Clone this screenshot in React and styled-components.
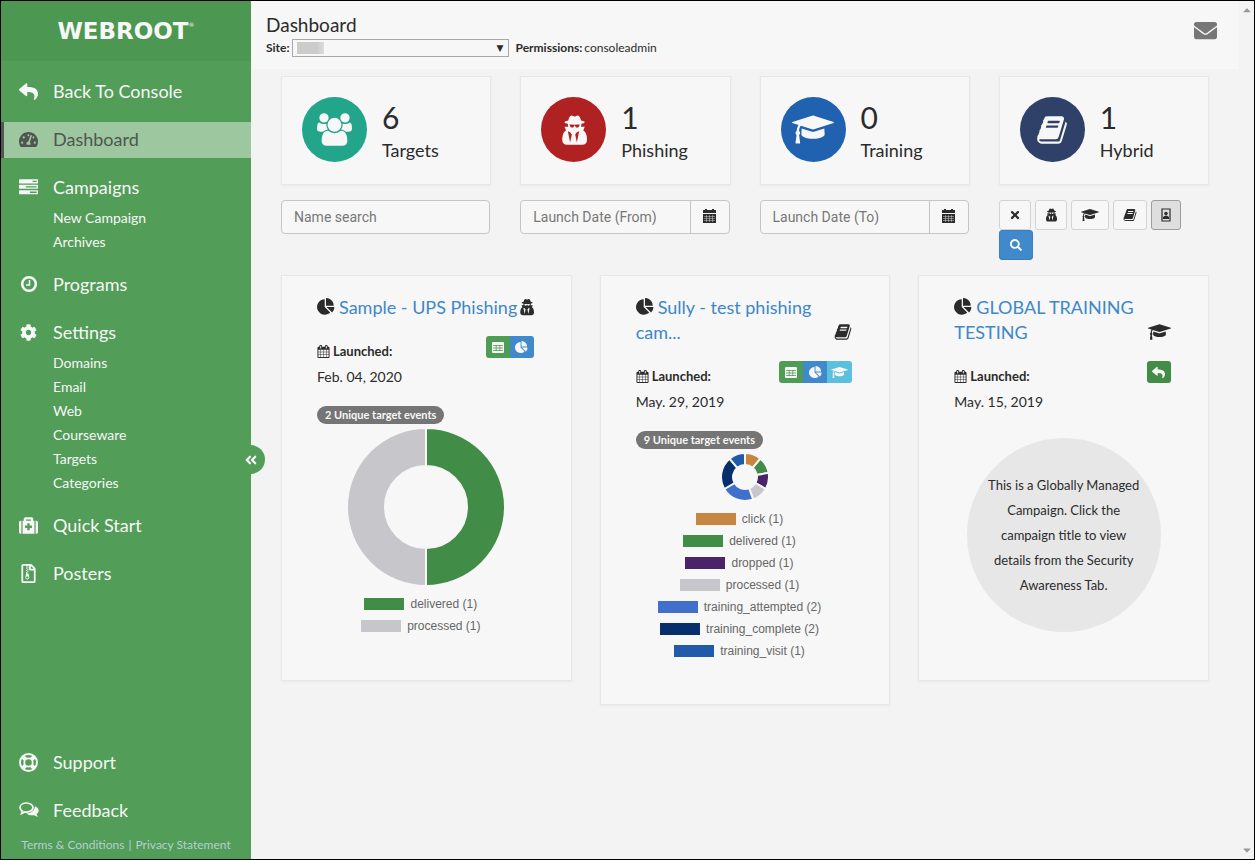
import React from 'react';
import styled, { createGlobalStyle } from 'styled-components';
import {
  FaReply, FaTachometerAlt, FaCog, FaMedkit, FaRegFileArchive,
  FaEnvelope, FaAngleDoubleLeft, FaSearch, FaTimes, FaCaretUp, FaCaretDown,
} from 'react-icons/fa';

const GlobalStyle = createGlobalStyle`
  * { box-sizing: border-box; }
  body {
    margin: 0;
    background: #f3f3f4;
    color: #2b2b2b;
    font-family: Lato, "Liberation Sans", sans-serif;
    font-size: 13px;
  }
  ul { list-style: none; margin: 0; padding: 0; }
  h1, h2, p { margin: 0; font-weight: 400; }
  a { text-decoration: none; }
  svg { display: block; flex: none; }
  button { font-family: inherit; cursor: pointer; }
`;

const shapes = {
  users: [1920, 'M593 896q-162 5-265 128h-134q-82 0-138-40.5t-56-118.5q0-353 124-353 6 0 43.5 21t97.5 42.5 119 21.5q67 0 133-23-5 37-5 66 0 139 81 256zm1071 637q0 120-73 189.5t-194 69.5h-874q-121 0-194-69.5t-73-189.5q0-53 3.5-103.5t14-109 26.5-108.5 43-97.5 62-81 85.5-53.5 111.5-20q10 0 43 21.5t73 48 107 48 135 21.5 135-21.5 107-48 73-48 43-21.5q61 0 111.5 20t85.5 53.5 62 81 43 97.5 26.5 108.5 14 109 3.5 103.5zm-1024-1277q0 106-75 181t-181 75-181-75-75-181 75-181 181-75 181 75 75 181zm704 384q0 159-112.5 271.5t-271.5 112.5-271.5-112.5-112.5-271.5 112.5-271.5 271.5-112.5 271.5 112.5 112.5 271.5zm576 225q0 78-56 118.5t-138 40.5h-134q-103-123-265-128 81-117 81-256 0-29-5-66 66 23 133 23 59 0 119-21.5t97.5-42.5 43.5-21q124 0 124 353zm-128-609q0 106-75 181t-181 75-181-75-75-181 75-181 181-75 181 75 75 181z'],
  spy: [1536, 'M576 1600l96-448-96-128-128-64zm384 0l128-640-128 64-96 128zm160-1010q-2-4-4-6-10-8-96-8-70 0-167 19-7 2-21 2t-21-2q-97-19-167-19-86 0-96 8-2 2-4 6 2 18 4 27 2 3 7.5 6.500t7.500 10.500q2 4 7.500 20.500t7 20.500 7.500 17 8.500 17 9 14 12 13.500 14 9.500 17.500 8 20.500 4 24.500 2q36 0 59-12.500t32.500-30 14.500-34.500 11.500-29.500 17.500-12.500h12q11 0 17.500 12.500t11.500 29.500 14.500 34.500 32.500 30 59 12.500q13 0 24.500-2t20.500-4 17.500-8 14-9.500 12-13.500 9-14 8.500-17 7.500-17 7-20.500 7.500-20.500q2-7 7.500-10.500t7.500-6.500q2-9 4-27zm416 879q0 121-73 190t-194 69h-874q-121 0-194-69t-73-190q0-61 4.500-118t19-125.500 37.500-123.500 63.500-103.500 93.500-74.500l-90-220h214q-22-64-22-128 0-12 2-32-194-40-194-96 0-57 210-99 17-62 51.500-134t70.500-114q32-37 76-37 30 0 84 31t84 31 84-31 84-31q44 0 76 37 36 42 70.500 114t51.500 134q210 42 210 99 0 56-194 96 7 81-20 160h214l-82 225q63 33 107.500 96.500t65.500 143.500 29 151.500 8 148.500z'],
  cap: [2304, 'M1774 836l18 316q4 69-82 128t-235 93.500-323 34.500-323-34.500-235-93.500-82-128l18-316 574 181q22 7 48 7t48-7zm530-324q0 23-22 31l-1120 352q-4 1-10 1t-10-1l-652-206q-43 34-71 111.500t-34 178.500q63 36 63 109 0 69-58 107l58 433q2 14-8 25-9 11-24 11h-192q-15 0-24-11-10-11-8-25l58-433q-58-38-58-107 0-73 65-111 11-207 98-330l-333-104q-22-8-22-31t22-31l1120-352q4-1 10-1t10 1l1120 352q22 8 22 31z'],
  book: [1792, 'M1703 478q40 57 18 129l-275 906q-19 64-76.500 107.500t-122.500 43.500h-923q-77 0-148.500-53.500t-99.500-131.500q-24-67-2-127 0-4 3-27t4-37q1-8-3-21.500t-3-19.500q2-11 8-21t16.500-23.500 16.500-23.500q23-38 45-91.500t30-91.500q3-10 .5-30t-.5-28q3-11 17-28t17-23q21-36 42-92t25-90q1-9-2.500-32t.5-28q4-13 22-30.500t22-22.500q19-26 42.500-84.500t27.500-96.500q1-8-3-25.500t-2-26.500q2-8 9-18t18-23 17-21q8-12 16.500-30.500t15-35 16-36 19.500-32 26.500-23.500 36-11.500 47.500 5.500l-1 3q38-9 51-9h761q74 0 114 56t18 130l-274 906q-36 119-71.500 153.500t-128.500 34.500h-869q-27 0-38 15-11 16-1 43 24 70 144 70h923q29 0 56-15.500t35-41.500l300-987q7-22 5-57 38 15 59 43zm-1064 2q-4 13 2 22.500t20 9.500h608q13 0 25.500-9.500t16.500-22.500l21-64q4-13-2-22.500t-20-9.500h-608q-13 0-25.500 9.500t-16.500 22.500zm-83 256q-4 13 2 22.500t20 9.500h608q13 0 25.500-9.500t16.500-22.500l21-64q4-13-2-22.500t-20-9.500h-608q-13 0-25.500 9.500t-16.500 22.500z'],
  pie: [1792, 'M768 890l546 546q-106 108-247.500 168t-298.500 60q-209 0-385.500-103t-279.500-279.500-103-385.500 103-385.500 279.500-279.500 385.500-103v762zm187 6h773q0 157-60 298.500t-168 247.500zm709-128h-768v-768q209 0 385.500 103t279.500 279.500 103 385.500z'],
  calendar: [1792, 'M192 1664h288v-288h-288v288zm352 0h320v-288h-320v288zm-352-352h288v-320h-288v320zm352 0h320v-320h-320v320zm-352-384h288v-288h-288v288zm736 736h320v-288h-320v288zm-384-736h320v-288h-320v288zm768 736h288v-288h-288v288zm-384-352h320v-320h-320v320zm-352-864v-288q0-13-9.500-22.500t-22.500-9.500h-64q-13 0-22.500 9.500t-9.500 22.500v288q0 13 9.500 22.500t22.500 9.500h64q13 0 22.500-9.500t9.500-22.500zm736 864h288v-320h-288v320zm-384-384h320v-288h-320v288zm384 0h288v-288h-288v288zm32-480v-288q0-13-9.500-22.500t-22.500-9.500h-64q-13 0-22.500 9.500t-9.500 22.500v288q0 13 9.500 22.500t22.500 9.500h64q13 0 22.500-9.500t9.500-22.500zm384-64v1280q0 52-38 90t-90 38h-1408q-52 0-90-38t-38-90v-1280q0-52 38-90t90-38h128v-96q0-66 47-113t113-47h64q66 0 113 47t47 113v96h384v-96q0-66 47-113t113-47h64q66 0 113 47t47 113v96h128q52 0 90 38t38 90z'],
  tasks: [1792, 'M1024 1408h640v-128h-640v128zm-384-512h1024v-128h-1024v128zm640-512h384v-128h-384v128zm512 832v256q0 26-19 45t-45 19h-1664q-26 0-45-19t-19-45v-256q0-26 19-45t45-19h1664q26 0 45 19t19 45zm0-512v256q0 26-19 45t-45 19h-1664q-26 0-45-19t-19-45v-256q0-26 19-45t45-19h1664q26 0 45 19t19 45zm0-512v256q0 26-19 45t-45 19h-1664q-26 0-45-19t-19-45v-256q0-26 19-45t45-19h1664q26 0 45 19t19 45z'],
};

const Glyph = ({ name, size }) => {
  const [width, d] = shapes[name];
  return (
    <svg viewBox={`0 0 ${width} 1792`} height={size} width={Math.round((size * width) / 1792)} fill="currentColor" aria-hidden="true">
      <path d={d} />
    </svg>
  );
};

const ClockIcon = () => (
  <svg viewBox="0 0 18 18" width="18" height="18" fill="none" stroke="currentColor" aria-hidden="true">
    <circle cx="9" cy="9" r="6.800" strokeWidth="2.600" />
    <path d="M9.500 5v5H6" strokeWidth="1.500" />
  </svg>
);

const SupportIcon = () => (
  <svg viewBox="0 0 19 19" width="19" height="19" fill="none" stroke="currentColor" aria-hidden="true">
    <circle cx="9.500" cy="9.500" r="8.500" strokeWidth="2" />
    <circle cx="9.500" cy="9.500" r="4.200" strokeWidth="1.800" />
    <path d="M3.500 3.500l3 3M15.500 3.500l-3 3M3.500 15.500l3-3M15.500 15.500l-3-3" strokeWidth="4" />
  </svg>
);

const FeedbackIcon = () => (
  <svg viewBox="0 0 20 16" width="20" height="16" aria-hidden="true">
    <path d="M7.500 1C3.800 1 1 3 1 5.600c0 1.500.9 2.800 2.400 3.600L2.600 11.500l3-1.600c.6.1 1.200.2 1.900.2 3.700 0 6.500-2 6.500-4.500S11.200 1 7.500 1z" fill="none" stroke="currentColor" strokeWidth="1.700" />
    <path d="M15.800 4.200c2.300.8 3.900 2.400 3.900 4.300 0 1.400-.8 2.600-2.200 3.500l1.500 3-4-1.800c-3.200.5-6-.3-7.600-1.800 4.800 0 8.400-2.800 8.400-7.200z" fill="currentColor" />
  </svg>
);

const DateIcon = () => (
  <svg viewBox="0 0 13 14" width="13" height="14" aria-hidden="true">
    <path d="M0 1h2V0h2v1h5V0h2v1h2v3H0zM0 5h13v9H0z" fill="#2b2b2b" />
    <path d="M1 7.500h11M1 9.500h11M1 11.500h11M3.500 6v7M6.500 6v7M9.500 6v7" stroke="#f7f7f7" strokeWidth=".4" />
  </svg>
);

const TableIcon = () => (
  <svg viewBox="0 0 12 11" width="12" height="11" aria-hidden="true">
    <rect width="12" height="11" rx="1" fill="#f7f7f7" />
    <path d="M1 3.500h10M1 6h10M1 8.500h10M4.200 3v6M7.800 3v6" stroke="#4f9c54" strokeWidth=".8" />
  </svg>
);

const ContactIcon = () => (
  <svg viewBox="0 0 10 14" width="10" height="14" aria-hidden="true">
    <path d="M1 1h8v12H1z" fill="none" stroke="currentColor" strokeWidth="1.200" />
    <circle cx="5" cy="5.500" r="1.700" fill="currentColor" />
    <path d="M2 11V9q3-3 6 0v2z" fill="currentColor" />
  </svg>
);

const Page = styled.div`
  display: flex;
  min-height: 100vh;
  border: 1px solid #000;
`;

const Sidebar = styled.aside`
  position: relative;
  display: flex;
  flex-direction: column;
  flex: 0 0 250px;
  background: #529d58;
  color: #f7f7f7;
`;

const Logo = styled.div`
  display: flex;
  justify-content: center;
  align-items: center;
  height: 60px;
  background: #4c9751;
  font-family: "DejaVu Sans", sans-serif;
  font-size: 23px;
  font-weight: 700;
`;

const Mark = styled.span`
  align-self: flex-start;
  margin-top: 20px;
  font-size: 6px;
  font-weight: 400;
`;

const Nav = styled.nav`
  display: flex;
  flex-direction: column;
  flex: 1;
  padding-top: 13px;
`;

const NavList = styled.ul`
  display: flex;
  flex-direction: column;
  gap: 12px;
  margin-top: ${({ $bottom }) => ($bottom ? 'auto' : '0')};
`;

const NavLink = styled.a`
  display: flex;
  align-items: center;
  height: 36px;
  padding-left: ${({ $active }) => ($active ? '14px' : '17px')};
  padding-bottom: 2px;
  border-left: ${({ $active }) => ($active ? '3px solid #555' : '0')};
  background: ${({ $active }) => ($active ? '#9dc79f' : 'transparent')};
  color: ${({ $active }) => ($active ? '#505550' : '#f7f7f7')};
  font-size: 18px;
`;

const NavIcon = styled.span`
  display: flex;
  justify-content: center;
  width: 21px;
  margin-right: 14px;
`;

const SubList = styled.ul`
  padding: 0 0 1px 52px;
`;

const SubLink = styled.a`
  display: block;
  color: #f7f7f7;
  font-size: 14px;
  line-height: 24px;
`;

const Legal = styled.div`
  display: flex;
  justify-content: center;
  gap: 4px;
  padding: 8px 0 6px;
  color: #b5cfd4;
  font-size: 12px;
  line-height: 16px;
  a { color: inherit; }
`;

const Collapse = styled.button`
  position: absolute;
  top: 444px;
  right: -14px;
  width: 29px;
  height: 29px;
  padding: 0 0 0 8px;
  border: 0;
  border-radius: 50%;
  background: #529d58;
  color: #f7f7f7;
`;

const Main = styled.main`
  flex: 1;
  min-width: 0;
`;

const Header = styled.header`
  display: flex;
  justify-content: space-between;
  height: 68px;
  padding: 12px 22px 0 15px;
  background: #f7f7f7;
`;

const Title = styled.h1`
  font-size: 19px;
  line-height: 24px;
`;

const SiteRow = styled.div`
  display: flex;
  align-items: center;
  gap: 2px;
  margin-top: 2px;
  font-size: 12px;
  line-height: 18px;
`;

const SelectWrap = styled.div`
  position: relative;
  width: 217px;
  margin-right: 5px;
  &::after {
    content: '▼';
    position: absolute;
    right: 5px;
    top: 0;
    font-family: "DejaVu Sans", sans-serif;
    font-size: 9px;
    pointer-events: none;
  }
`;

const Select = styled.select`
  display: block;
  appearance: none;
  width: 100%;
  height: 18px;
  border: 1px solid #a8a8a4;
  border-radius: 0;
  background: #f7f7f7 linear-gradient(90deg, #ccc 75%, #ddd) no-repeat 4px 2px / 27px 12px;
`;

const MailButton = styled.button`
  align-self: flex-start;
  margin-top: 6px;
  padding: 0;
  border: 0;
  background: none;
  color: #777;
`;

const Content = styled.div`
  display: grid;
  gap: 15px;
  padding: 7px 30px 30px;
`;

const FourCols = styled.div`
  display: grid;
  grid-template-columns: repeat(4, minmax(0, 1fr));
  gap: 29px;
`;

const ThreeCols = styled.div`
  display: grid;
  grid-template-columns: repeat(3, minmax(0, 1fr));
  align-items: start;
  gap: 28px;
`;

const Panel = styled.section`
  background: #f7f7f7;
  border: 1px solid #e6e7e6;
  box-shadow: 0 1px 2px #e9e9eb;
`;

const Stat = styled(Panel)`
  display: flex;
  gap: 15px;
  padding: 20px 20px 21px;
`;

const StatCircle = styled.div`
  display: flex;
  align-items: center;
  justify-content: center;
  width: 65px;
  height: 65px;
  border-radius: 50%;
  background: ${({ $color }) => $color};
  color: #f7f7f7;
`;

const StatValue = styled.p`
  font-size: 30px;
  line-height: 40px;
`;

const StatLabel = styled.p`
  font-size: 18px;
  line-height: 26px;
`;

const Field = styled.label`
  display: flex;
  height: 34px;
  margin-right: 1px;
  border: 1px solid #c3c7c3;
  border-radius: 4px;
  background: #f7f7f7;
`;

const TextInput = styled.input`
  flex: 1;
  min-width: 0;
  padding: 0 12px;
  border: 0;
  background: none;
  font-family: Roboto, sans-serif;
  font-size: 14px;
  &::placeholder { color: #777; }
`;

const DateButton = styled.button`
  display: flex;
  align-items: center;
  justify-content: center;
  width: 39px;
  padding: 0 0 3px;
  border: 0;
  border-left: 1px solid #c3c7c3;
  background: none;
`;

const Filters = styled.div`
  display: flex;
  flex-wrap: wrap;
  gap: 0 4px;
`;

const FilterButton = styled.button`
  display: flex;
  align-items: center;
  height: 30px;
  padding: 0 9px;
  border: 1px solid ${({ $pressed }) => ($pressed ? '#a09c9c' : '#d2d4d2')};
  border-radius: 3px;
  background: ${({ $pressed }) => ($pressed ? '#dedede' : '#f7f7f7')};
  color: #2b2b2b;
`;

const SearchButton = styled(FilterButton)`
  padding: 0 10px;
  border-color: #357fc2;
  background: #4089cb;
  color: #f7f7f7;
`;

const Campaign = styled(Panel)`
  min-height: 406px;
  padding: 19px 35px 42px;
`;

const CampaignHead = styled.div`
  display: flex;
  align-items: flex-end;
  justify-content: space-between;
  margin-right: 2px;
`;

const CampaignTitle = styled.h2`
  flex: 0 1 200px;
  font-size: 18px;
  line-height: 25px;
  white-space: ${({ $single }) => ($single ? 'nowrap' : 'normal')};
  svg { display: inline-block; margin-right: 4px; vertical-align: -2px; }
  a { color: #4087c8; }
`;

const TypeIcon = styled.span`
  display: flex;
  align-items: center;
  height: 25px;
  padding-bottom: 2px;
`;

const Meta = styled.div`
  display: flex;
  justify-content: space-between;
  align-items: flex-start;
  margin: 16px 2px 0 0;
`;

const Launched = styled.div`
  padding-top: 3px;
  font-size: 14px;
  line-height: 25px;
`;

const LaunchedLabel = styled.strong`
  display: flex;
  align-items: center;
  gap: 3px;
  font-size: 13px;
`;

const Actions = styled.div`
  display: flex;
  border-radius: 3px;
  overflow: hidden;
`;

const Action = styled.button`
  display: flex;
  align-items: center;
  justify-content: center;
  min-width: 24px;
  height: 22px;
  padding: 0 4px;
  border: 0;
  background: ${({ $color }) => $color};
  color: #f7f7f7;
`;

const Badge = styled.span`
  display: inline-block;
  margin-top: 17px;
  padding: 0 8px;
  border-radius: 9px;
  background: #757575;
  color: #f7f7f7;
  font-size: 11px;
  font-weight: 700;
  line-height: 18px;
`;

const Chart = styled.svg`
  margin: 4px auto 7px;
`;

const Legend = styled.ul`
  li {
    display: flex;
    align-items: center;
    justify-content: center;
    gap: 6px;
    padding-right: 11px;
    color: #666;
    font-family: "Liberation Sans", Arial, sans-serif;
    font-size: 12px;
    line-height: 22px;
  }
`;

const Swatch = styled.i`
  width: 40px;
  height: 12px;
  background: ${({ $color }) => $color};
`;

const Notice = styled.p`
  display: flex;
  align-items: center;
  width: 194px;
  height: 194px;
  margin: 24px auto 0;
  padding: 0 16px 0 16px;
  border-radius: 50%;
  background: #e7e7e8;
  font-size: 13px;
  line-height: 25px;
  text-align: center;
`;

const Scrollbar = styled.div`
  display: flex;
  flex-direction: column;
  justify-content: space-between;
  align-items: center;
  flex: 0 0 15px;
  padding: 3px 0;
  color: #999;
`;

const nav = [
  { label: 'Back To Console', icon: <FaReply size={19} /> },
  { label: 'Dashboard', icon: <FaTachometerAlt size={19} />, active: true },
  { label: 'Campaigns', icon: <Glyph name="tasks" size={19} />, children: ['New Campaign', 'Archives'] },
  { label: 'Programs', icon: <ClockIcon /> },
  { label: 'Settings', icon: <FaCog size={17} />, children: ['Domains', 'Email', 'Web', 'Courseware', 'Targets', 'Categories'] },
  { label: 'Quick Start', icon: <FaMedkit size={19} /> },
  { label: 'Posters', icon: <FaRegFileArchive size={19} /> },
];

const bottomNav = [
  { label: 'Support', icon: <SupportIcon /> },
  { label: 'Feedback', icon: <FeedbackIcon /> },
];

const stats = [
  { label: 'Targets', value: 6, color: '#22a58a', icon: <Glyph name="users" size={33} /> },
  { label: 'Phishing', value: 1, color: '#b02121', icon: <Glyph name="spy" size={32} /> },
  { label: 'Training', value: 0, color: '#2061b0', icon: <Glyph name="cap" size={33} /> },
  { label: 'Hybrid', value: 1, color: '#2f4069', icon: <Glyph name="book" size={32} /> },
];

const upsEvents = [
  { label: 'delivered', count: 1, color: '#418c47' },
  { label: 'processed', count: 1, color: '#c6c6cb' },
];

const sullyEvents = [
  { label: 'click', count: 1, color: '#c68642' },
  { label: 'delivered', count: 1, color: '#418c47' },
  { label: 'dropped', count: 1, color: '#4a2468' },
  { label: 'processed', count: 1, color: '#c6c6cb' },
  { label: 'training_attempted', count: 2, color: '#4070cc' },
  { label: 'training_complete', count: 2, color: '#062f6c' },
  { label: 'training_visit', count: 1, color: '#205aa9' },
];

const GREEN = '#4f9c54';
const BLUE = '#4089cb';

const Menu = ({ items, bottom }) => (
  <NavList $bottom={bottom}>
    {items.map(({ label, icon, active, children }) => (
      <li key={label}>
        <NavLink href="#" $active={active}>
          <NavIcon>{icon}</NavIcon>
          {label}
        </NavLink>
        {children && (
          <SubList>
            {children.map(child => <li key={child}><SubLink href="#">{child}</SubLink></li>)}
          </SubList>
        )}
      </li>
    ))}
  </NavList>
);

const Donut = ({ data, size, inner }) => {
  const r = size / 2;
  const total = data.reduce((sum, item) => sum + item.count, 0);
  const point = (radius, part) => {
    const angle = (part / total) * 2 * Math.PI;
    return `${r + radius * Math.sin(angle)} ${r - radius * Math.cos(angle)}`;
  };
  let start = 0;
  return (
    <Chart width={size} height={size} viewBox={`0 0 ${size} ${size}`} role="img" aria-label="Target events">
      {data.map(({ label, count, color }) => {
        const end = start + count;
        const d = `M${point(r, start)}A${r} ${r} 0 0 1 ${point(r, end)}L${point(inner, end)}A${inner} ${inner} 0 0 0 ${point(inner, start)}Z`;
        start = end;
        return <path key={label} d={d} fill={color} stroke="#f7f7f7" strokeWidth="2" />;
      })}
    </Chart>
  );
};

const Events = ({ data, size, inner, total }) => (
  <>
    <Badge>{total} Unique target events</Badge>
    <Donut data={data} size={size} inner={inner} />
    <Legend>
      {data.map(({ label, count, color }) => (
        <li key={label}><Swatch $color={color} />{label} ({count})</li>
      ))}
    </Legend>
  </>
);

const CampaignCard = ({ title, single, type, date, actions, children }) => (
  <Campaign>
    <CampaignHead>
      <CampaignTitle $single={single}>
        <Glyph name="pie" size={18} />
        <a href="#">{title}</a>
      </CampaignTitle>
      <TypeIcon><Glyph name={type} size={18} /></TypeIcon>
    </CampaignHead>
    <Meta>
      <Launched>
        <LaunchedLabel><Glyph name="calendar" size={13} />Launched:</LaunchedLabel>
        {date}
      </Launched>
      <Actions>{actions}</Actions>
    </Meta>
    {children}
  </Campaign>
);

const TableAction = () => <Action $color={GREEN} aria-label="Table"><TableIcon /></Action>;
const ChartAction = () => <Action $color={BLUE} aria-label="Chart"><Glyph name="pie" size={13} /></Action>;

export default function App() {
  return (
    <Page>
      <GlobalStyle />
      <Sidebar>
        <Logo>WEBROOT<Mark>®</Mark></Logo>
        <Nav>
          <Menu items={nav} />
          <Menu items={bottomNav} bottom />
        </Nav>
        <Legal>
          <a href="#">Terms &amp; Conditions</a>
          <span>|</span>
          <a href="#">Privacy Statement</a>
        </Legal>
        <Collapse aria-label="Collapse menu"><FaAngleDoubleLeft size={14} /></Collapse>
      </Sidebar>
      <Main>
        <Header>
          <div>
            <Title>Dashboard</Title>
            <SiteRow>
              <label htmlFor="site"><strong>Site:</strong></label>
              <SelectWrap>
                <Select id="site"><option aria-label="Current site" /></Select>
              </SelectWrap>
              <strong>Permissions:</strong>
              <span>consoleadmin</span>
            </SiteRow>
          </div>
          <MailButton aria-label="Messages"><FaEnvelope size={23} /></MailButton>
        </Header>
        <Content>
          <FourCols>
            {stats.map(({ label, value, color, icon }) => (
              <Stat key={label}>
                <StatCircle $color={color}>{icon}</StatCircle>
                <div>
                  <StatValue>{value}</StatValue>
                  <StatLabel>{label}</StatLabel>
                </div>
              </Stat>
            ))}
          </FourCols>
          <FourCols>
            <Field><TextInput placeholder="Name search" aria-label="Name search" /></Field>
            {['From', 'To'].map(bound => (
              <Field key={bound}>
                <TextInput placeholder={`Launch Date (${bound})`} aria-label={`Launch Date (${bound})`} />
                <DateButton aria-label="Pick a date"><DateIcon /></DateButton>
              </Field>
            ))}
            <Filters>
              <FilterButton aria-label="Clear"><FaTimes size={12} /></FilterButton>
              <FilterButton aria-label="Phishing"><Glyph name="spy" size={14} /></FilterButton>
              <FilterButton aria-label="Training"><Glyph name="cap" size={14} /></FilterButton>
              <FilterButton aria-label="Hybrid"><Glyph name="book" size={14} /></FilterButton>
              <FilterButton aria-label="All types" $pressed><ContactIcon /></FilterButton>
              <SearchButton aria-label="Search"><FaSearch size={12} /></SearchButton>
            </Filters>
          </FourCols>
          <ThreeCols>
            <CampaignCard
              title="Sample - UPS Phishing"
              single
              type="spy"
              date="Feb. 04, 2020"
              actions={<><TableAction /><ChartAction /></>}
            >
              <Events data={upsEvents} size={158} inner={41} total={2} />
            </CampaignCard>
            <CampaignCard
              title="Sully - test phishing cam..."
              type="book"
              date="May. 29, 2019"
              actions={(
                <>
                  <TableAction />
                  <ChartAction />
                  <Action $color="#5bc0de" aria-label="Training"><Glyph name="cap" size={13} /></Action>
                </>
              )}
            >
              <Events data={sullyEvents} size={48} inner={12} total={9} />
            </CampaignCard>
            <CampaignCard
              title="GLOBAL TRAINING TESTING"
              type="cap"
              date="May. 15, 2019"
              actions={<Action $color="#418c47" aria-label="Return"><FaReply size={13} /></Action>}
            >
              <Notice>This is a Globally Managed Campaign. Click the campaign title to view details from the Security Awareness Tab.</Notice>
            </CampaignCard>
          </ThreeCols>
        </Content>
      </Main>
      <Scrollbar aria-hidden="true"><FaCaretUp size={12} /><FaCaretDown size={12} /></Scrollbar>
    </Page>
  );
}
